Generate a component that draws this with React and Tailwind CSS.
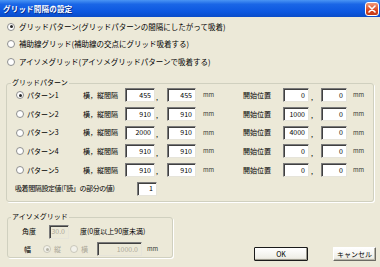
import React from "react";

function Radio({ checked, disabled }) {
  return (
    <span
      className={`inline-flex items-center justify-center w-[8px] h-[8px] rounded-full border shrink-0 ${
        disabled ? "border-[#C9C7BA] bg-[#F2F1EA]" : "border-[#8E8F8F] bg-white"
      }`}
    >
      {checked && (
        <span className={`w-[3px] h-[3px] rounded-full ${disabled ? "bg-[#B5B3A6]" : "bg-[#2A2A2A]"}`} />
      )}
    </span>
  );
}

function Input({ value, w, disabled }) {
  return (
    <div
      className={`h-[14px] flex items-center justify-end pr-[3px] border border-t-[#7A7A7A] border-l-[#7A7A7A] border-b-[#E6E4DA] border-r-[#E6E4DA] shadow-[inset_1px_1px_0_#404040] ${
        disabled ? "bg-[#ECE9D8] text-[#ACA899]" : "bg-white text-black"
      } ${w}`}
    >
      <span className="text-[7px] leading-none">{value}</span>
    </div>
  );
}

const rows = [
  { n: "パターン1", a: "455", b: "455", c: "0", d: "0", checked: true },
  { n: "パターン2", a: "910", b: "910", c: "1000", d: "0" },
  { n: "パターン3", a: "2000", b: "910", c: "4000", d: "0" },
  { n: "パターン4", a: "910", b: "910", c: "0", d: "0" },
  { n: "パターン5", a: "910", b: "910", c: "0", d: "0" },
];

export default function App() {
  return (
    <div
      className="w-[380px] h-[267px] bg-[#ECE9D8] flex flex-col overflow-hidden text-black text-[7px] leading-none"
      style={{ fontFamily: '"Noto Sans CJK JP", "Noto Sans", sans-serif' }}
    >
      {/* Title bar */}
      <div className="h-[17px] shrink-0 flex items-center justify-between pl-[3px] pr-[1px] bg-[linear-gradient(to_bottom,#4A95F4_0%,#1A66E6_25%,#0C57E0_70%,#0A4CC8_100%)]">
        <span className="text-white font-bold text-[7.5px] tracking-[0.2px] [text-shadow:1px_1px_0_#0A2F8C]">
          グリッド間隔の設定
        </span>
        <div className="w-[14px] h-[14px] rounded-[3px] border border-white bg-[linear-gradient(to_bottom,#F29A7A,#D9461F_60%,#C23A18)] flex items-center justify-center">
          <svg width="8" height="8" viewBox="0 0 8 8">
            <path d="M1 1 L7 7 M7 1 L1 7" stroke="white" strokeWidth="1.6" strokeLinecap="round" />
          </svg>
        </div>
      </div>

      {/* Top radios */}
      <div className="flex flex-col pl-[7px] pt-[1px] text-[7.5px]">
        <div className="h-[17px] flex items-center gap-[4px]">
          <Radio checked />
          <span>グリッドパターン(グリッドパターンの間隔にしたがって吸着)</span>
        </div>
        <div className="h-[17px] flex items-center gap-[4px]">
          <Radio />
          <span>補助線グリッド(補助線の交点にグリッド吸着する)</span>
        </div>
        <div className="h-[18px] pt-[1px] flex items-center gap-[4px]">
          <Radio />
          <span>アイソメグリッド(アイソメグリッドパターンで吸着する)</span>
        </div>
      </div>

      {/* Grid pattern group */}
      <div className="relative ml-[6px] mt-[13px] w-[368px] h-[119px] border border-[#D0D0BF] rounded-[3px] shadow-[1px_1px_0_white] flex flex-col pt-[2px]">
        <span className="absolute left-[4px] top-[-5px] bg-[#ECE9D8] px-[1px]">グリッドパターン</span>
        {rows.map((r) => (
          <div key={r.n} className="h-[18.7px] flex items-center">
            <div className="w-[76px] pl-[9px] flex items-center gap-[3px]">
              <Radio checked={r.checked} />
              <span>{r.n}</span>
            </div>
            <div className="w-[42px]">横，縦間隔</div>
            <Input value={r.a} w="w-[30px]" />
            <div className="w-[12px] pl-[1px] self-end pb-[4px]">,</div>
            <Input value={r.b} w="w-[29px]" />
            <div className="w-[7px]" />
            <div className="w-[40px] text-[6px] text-[#333]">mm</div>
            <div className="w-[40px]">開始位置</div>
            <Input value={r.c} w="w-[26px]" />
            <div className="w-[12px] pl-[2px] self-end pb-[4px]">,</div>
            <Input value={r.d} w="w-[26px]" />
            <div className="w-[6px]" />
            <div className="text-[6px] text-[#333]">mm</div>
          </div>
        ))}
        <div className="h-[19px] flex items-center pl-[8px]">
          <div className="w-[122px] tracking-[-0.4px]">吸着間隔設定値(「読」の部分の値)</div>
          <Input value="1" w="w-[20px]" />
        </div>
      </div>

      {/* Bottom section */}
      <div className="flex mt-[15px]">
        <div className="relative ml-[7px] w-[166px] h-[41px] border border-[#D0D0BF] rounded-[3px] shadow-[1px_1px_0_white] flex flex-col pt-[6px]">
          <span className="absolute left-[3px] top-[-5px] bg-[#ECE9D8] px-[1px]">アイソメグリッド</span>
          <div className="h-[15px] flex items-center pl-[14px]">
            <div className="w-[27px]">角度</div>
            <Input value="30.0" w="w-[20px]" disabled />
            <div className="w-[11px]" />
            <span>度(0度以上90度未満)</span>
          </div>
          <div className="h-[16px] flex items-center pl-[16px] mt-[2px]">
            <div className="w-[19px]">幅</div>
            <div className="w-[27px] flex items-center gap-[3px] text-[#ACA899]">
              <Radio checked disabled />
              <span>縦</span>
            </div>
            <div className="w-[27px] flex items-center gap-[3px] text-[#ACA899]">
              <Radio disabled />
              <span>横</span>
            </div>
            <Input value="1000.0" w="w-[45px]" disabled />
            <div className="w-[5px]" />
            <span className="text-[6px] text-[#333]">mm</span>
          </div>
        </div>
        <div className="flex items-start gap-[25px] ml-[81px] mt-[30px]">
          <button className="w-[54px] h-[14px] border border-[#1B1B1B] rounded-[1px] bg-[linear-gradient(to_bottom,#FFFFFF,#F0EFE8_80%,#DEDBCE)] shadow-[inset_-1px_-1px_0_#9C9A8E] flex items-center justify-center text-[7px] leading-none">
            OK
          </button>
          <button className="w-[43px] h-[14px] border border-t-[#FFFFFF] border-l-[#FFFFFF] border-b-[#6B6A63] border-r-[#6B6A63] rounded-[1px] bg-[linear-gradient(to_bottom,#FFFFFF,#F0EFE8_80%,#DEDBCE)] shadow-[inset_-1px_-1px_0_#B8B6AA] flex items-center justify-center text-[7px] leading-none">
            キャンセル
          </button>
        </div>
      </div>
    </div>
  );
}
